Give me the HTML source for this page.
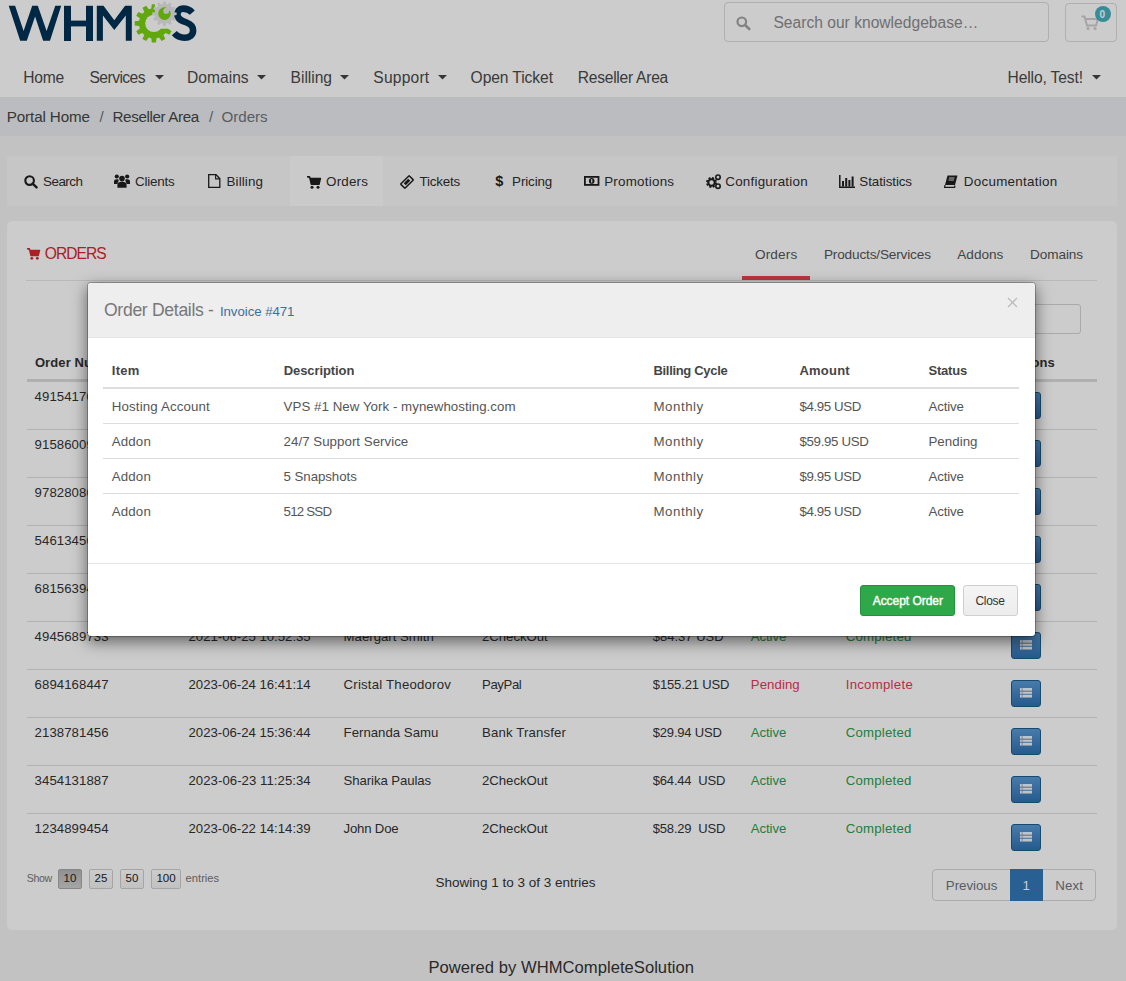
<!DOCTYPE html>
<html><head><meta charset="utf-8"><title>Orders</title>
<style>
html,body{margin:0;padding:0}
body{width:1126px;height:981px;overflow:hidden;position:relative;background:#f3f3f3;font-family:"Liberation Sans",sans-serif}
.a{position:absolute;box-sizing:border-box}
.t{position:absolute;white-space:pre}
svg{position:absolute;overflow:visible}
</style></head><body>
<div class="a" style="left:0px;top:0px;width:1126px;height:97px;background:#fff"></div>
<svg style="left:0;top:0" width="210" height="48" viewBox="0 0 210 48">
<g fill="#003356">
<polygon points="8.7,5.8 15.1,5.8 23.6,31 32.2,5.8 37.8,5.8 46.6,31 55.3,5.8 61.2,5.8 50,40.7 43.1,40.7 35.1,16.4 26.8,40.7 20.2,40.7"/>
<rect x="64" y="5.8" width="7" height="35.2"/>
<rect x="86" y="5.8" width="7" height="35.2"/>
<rect x="70" y="20.6" width="17" height="5.8"/>
<polygon points="96.8,5.8 103.5,5.8 114.3,20.2 125.1,5.8 131.8,5.8 131.8,40.7 125.8,40.7 125.8,15.5 114.3,30 102.9,15.5 102.9,40.7 96.8,40.7"/>
</g>
<path d="M192.3,12.6 C189.8,9.8 186.3,8.6 183,8.6 C179.2,8.6 177.4,11.2 177.4,14.5 C177.4,19.3 182,20.9 186.6,22.5 C191,24.1 193.1,26.5 193.1,30.5 C193.1,35.2 189.5,37.7 184.5,37.7 C180,37.7 176.6,35.9 174.3,33.2" fill="none" stroke="#003356" stroke-width="6.6"/>
<g id="gg"></g>
</svg>
<svg style="left:0;top:0" width="210" height="48" viewBox="0 0 210 48">
<defs><mask id="mk"><rect x="0" y="0" width="210" height="48" fill="#fff"/>
<circle cx="153.9" cy="23.4" r="8.7" fill="#000"/>
<rect x="155" y="0" width="40" height="28.7" fill="#000"/>
</mask></defs>
<polygon points="168.68,20.82 173.08,21.28 173.08,25.52 168.68,25.98 167.99,28.55 171.57,31.16 169.45,34.83 165.41,33.02 163.52,34.91 165.33,38.95 161.66,41.07 159.05,37.49 156.48,38.18 156.02,42.58 151.78,42.58 151.32,38.18 148.75,37.49 146.14,41.07 142.47,38.95 144.28,34.91 142.39,33.02 138.35,34.83 136.23,31.16 139.81,28.55 139.12,25.98 134.72,25.52 134.72,21.28 139.12,20.82 139.81,18.25 136.23,15.64 138.35,11.97 142.39,13.78 144.28,11.89 142.47,7.85 146.14,5.73 148.75,9.31 151.32,8.62 151.78,4.22 156.02,4.22 156.48,8.62 159.05,9.31 161.66,5.73 165.33,7.85 163.52,11.89 165.41,13.78 169.45,11.97 171.57,15.64 167.99,18.25" fill="#7ad310" mask="url(#mk)"/>
<polygon points="174.06,12.17 176.63,12.51 176.63,15.09 174.06,15.43 173.59,17.22 175.64,18.80 174.35,21.03 171.95,20.05 170.65,21.35 171.63,23.75 169.40,25.04 167.82,22.99 166.03,23.46 165.69,26.03 163.11,26.03 162.77,23.46 160.98,22.99 159.40,25.04 157.17,23.75 158.15,21.35 156.85,20.05 154.45,21.03 153.16,18.80 155.21,17.22 154.74,15.43 152.17,15.09 152.17,12.51 154.74,12.17 155.21,10.38 153.16,8.80 154.45,6.57 156.85,7.55 158.15,6.25 157.17,3.85 159.40,2.56 160.98,4.61 162.77,4.14 163.11,1.57 165.69,1.57 166.03,4.14 167.82,4.61 169.40,2.56 171.63,3.85 170.65,6.25 171.95,7.55 174.35,6.57 175.64,8.80 173.59,10.38" fill="#e6e6e6"/>
<circle cx="164.5" cy="13.6" r="6.3" fill="#7ad310"/>
<circle cx="166.2" cy="10.9" r="2.9" fill="#e6e6e6"/>
<polygon points="164.6,9.3 167.8,12.5 172.5,8 169.3,4.8" fill="#e6e6e6"/>
</svg>
<div class="a" style="left:724px;top:2px;width:325px;height:40px;border:1px solid #dcdcdc;border-radius:4px;background:#fff"></div>
<svg style="left:736px;top:16px" width="15" height="14" viewBox="0 0 15 14">
<circle cx="5.8" cy="5.8" r="4.3" fill="none" stroke="#a3a3a3" stroke-width="2.2"/>
<line x1="9" y1="9" x2="13.3" y2="13" stroke="#a3a3a3" stroke-width="2.6" stroke-linecap="round"/></svg>
<span class="t" style="left:773.40px;top:15.29px;font-size:15.6px;line-height:15.6px;color:#8c8c8c;letter-spacing:0.014px;">Search our knowledgebase…</span>
<div class="a" style="left:1065px;top:3px;width:52px;height:39px;border:1px solid #dcdcdc;border-radius:4px;background:#fff"></div>
<svg style="left:1081px;top:15px" width="18" height="16" viewBox="0 0 18 16">
<path d="M0.5,1.5 H3.5 L6,10.5 H15 L17,4 H5" fill="none" stroke="#cfcfcf" stroke-width="2"/>
<circle cx="7" cy="13.5" r="1.6" fill="#cfcfcf"/><circle cx="14" cy="13.5" r="1.6" fill="#cfcfcf"/></svg>
<div class="a" style="left:1095px;top:6px;width:16px;height:16px;border-radius:8px;background:#45b0c0;"></div>
<span class="t" style="left:1099.40px;top:9.93px;font-size:10px;line-height:10px;color:#fff;font-weight:bold;">0</span>
<span class="t" style="left:23.30px;top:70.19px;font-size:15.6px;line-height:15.6px;color:#4a4a4a;letter-spacing:-0.205px;">Home</span>
<span class="t" style="left:89.50px;top:70.19px;font-size:15.6px;line-height:15.6px;color:#4a4a4a;letter-spacing:-0.546px;">Services</span>
<svg style="left:154.5px;top:75px" width="9" height="5" viewBox="0 0 9 5"><polygon points="0,0 9,0 4.5,4.6" fill="#444"/></svg>
<span class="t" style="left:187.10px;top:70.19px;font-size:15.6px;line-height:15.6px;color:#4a4a4a;letter-spacing:0.007px;">Domains</span>
<svg style="left:257.4px;top:75px" width="9" height="5" viewBox="0 0 9 5"><polygon points="0,0 9,0 4.5,4.6" fill="#444"/></svg>
<span class="t" style="left:290.60px;top:70.19px;font-size:15.6px;line-height:15.6px;color:#4a4a4a;letter-spacing:-0.037px;">Billing</span>
<svg style="left:340.4px;top:75px" width="9" height="5" viewBox="0 0 9 5"><polygon points="0,0 9,0 4.5,4.6" fill="#444"/></svg>
<span class="t" style="left:373.30px;top:70.19px;font-size:15.6px;line-height:15.6px;color:#4a4a4a;letter-spacing:0.210px;">Support</span>
<svg style="left:437.9px;top:75px" width="9" height="5" viewBox="0 0 9 5"><polygon points="0,0 9,0 4.5,4.6" fill="#444"/></svg>
<span class="t" style="left:470.60px;top:70.19px;font-size:15.6px;line-height:15.6px;color:#4a4a4a;letter-spacing:-0.084px;">Open Ticket</span>
<span class="t" style="left:577.80px;top:70.19px;font-size:15.6px;line-height:15.6px;color:#4a4a4a;letter-spacing:-0.262px;">Reseller Area</span>
<span class="t" style="left:1007.50px;top:70.19px;font-size:15.6px;line-height:15.6px;color:#4a4a4a;letter-spacing:-0.116px;">Hello, Test!</span>
<svg style="left:1092.4px;top:75px" width="9" height="5" viewBox="0 0 9 5"><polygon points="0,0 9,0 4.5,4.6" fill="#444"/></svg>
<div class="a" style="left:0px;top:97px;width:1126px;height:39px;background:#e9ecef"></div>
<span class="t" style="left:6.80px;top:108.93px;font-size:15.2px;line-height:15.2px;color:#454545;letter-spacing:-0.128px;">Portal Home</span>
<span class="t" style="left:99.50px;top:108.93px;font-size:15.2px;line-height:15.2px;color:#6c757d;">/</span>
<span class="t" style="left:112.50px;top:108.93px;font-size:15.2px;line-height:15.2px;color:#454545;letter-spacing:-0.371px;">Reseller Area</span>
<span class="t" style="left:209.00px;top:108.93px;font-size:15.2px;line-height:15.2px;color:#6c757d;">/</span>
<span class="t" style="left:221.60px;top:108.93px;font-size:15.2px;line-height:15.2px;color:#6f757b;letter-spacing:-0.091px;">Orders</span>
<div class="a" style="left:7px;top:156px;width:1110px;height:50px;background:#f8f8f8"></div>
<div class="a" style="left:290px;top:156px;width:93px;height:50px;background:#fdfdfd"></div>
<span class="t" style="left:43.00px;top:174.66px;font-size:13.4px;line-height:13.4px;color:#2e2e2e;letter-spacing:-0.492px;">Search</span>
<span class="t" style="left:135.00px;top:174.66px;font-size:13.4px;line-height:13.4px;color:#2e2e2e;letter-spacing:-0.193px;">Clients</span>
<span class="t" style="left:226.60px;top:174.66px;font-size:13.4px;line-height:13.4px;color:#2e2e2e;letter-spacing:0.091px;">Billing</span>
<span class="t" style="left:326.10px;top:174.66px;font-size:13.4px;line-height:13.4px;color:#2e2e2e;letter-spacing:0.189px;">Orders</span>
<span class="t" style="left:419.40px;top:174.66px;font-size:13.4px;line-height:13.4px;color:#2e2e2e;letter-spacing:-0.173px;">Tickets</span>
<span class="t" style="left:512.10px;top:174.66px;font-size:13.4px;line-height:13.4px;color:#2e2e2e;letter-spacing:-0.127px;">Pricing</span>
<span class="t" style="left:604.20px;top:174.66px;font-size:13.4px;line-height:13.4px;color:#2e2e2e;letter-spacing:0.236px;">Promotions</span>
<span class="t" style="left:725.30px;top:174.66px;font-size:13.4px;line-height:13.4px;color:#2e2e2e;letter-spacing:0.224px;">Configuration</span>
<span class="t" style="left:859.30px;top:174.66px;font-size:13.4px;line-height:13.4px;color:#2e2e2e;letter-spacing:-0.090px;">Statistics</span>
<span class="t" style="left:963.80px;top:174.66px;font-size:13.4px;line-height:13.4px;color:#2e2e2e;letter-spacing:0.272px;">Documentation</span>
<svg style="left:23.7px;top:174.9px" width="14" height="14" viewBox="0 0 14 14"><circle cx="5.6" cy="5.6" r="4.3" fill="none" stroke="#1f1f1f" stroke-width="2.1"/><line x1="8.6" y1="8.6" x2="12.6" y2="12.4" stroke="#1f1f1f" stroke-width="2.4" stroke-linecap="round"/></svg>
<svg style="left:114.4px;top:174px" width="16" height="14" viewBox="0 0 16 14"><g fill="#1f1f1f"><circle cx="2.8" cy="2.5" r="2.1"/><circle cx="13.2" cy="2.5" r="2.1"/><circle cx="8" cy="4.6" r="2.8"/>
<path d="M0,10 V7.6 C0,5.9 1,5.2 2.8,5.2 C4.2,5.2 4.9,5.6 4.7,6.6 L3.4,10 Z"/><path d="M16,10 V7.6 C16,5.9 15,5.2 13.2,5.2 C11.8,5.2 11.1,5.6 11.3,6.6 L12.6,10 Z"/>
<path d="M3.4,13.7 V11 C3.4,8.7 5,7.7 8,7.7 C11,7.7 12.6,8.7 12.6,11 V13.7 Z"/></g></svg>
<svg style="left:208px;top:173.8px" width="13" height="15" viewBox="0 0 13 15"><path d="M0.7,0.7 H8 L11.8,4.5 V13.3 H0.7 Z" fill="none" stroke="#1f1f1f" stroke-width="1.3"/><path d="M7.6,0.7 V4.9 H11.8" fill="none" stroke="#1f1f1f" stroke-width="1.1"/></svg>
<svg style="left:307.3px;top:176px" width="14" height="13" viewBox="0 0 14 13"><path d="M0,0.8 H2.6 L4.3,8.2 H12 L13.4,2.6 H3" fill="#1f1f1f" stroke="#1f1f1f" stroke-width="1.5" stroke-linejoin="round"/><circle cx="5" cy="11.2" r="1.5" fill="#1f1f1f"/><circle cx="11" cy="11.2" r="1.5" fill="#1f1f1f"/></svg>
<svg style="left:400.2px;top:174.5px" width="14" height="14" viewBox="0 0 14 14"><g transform="rotate(-45 7 7)"><rect x="1" y="4" width="12" height="6" rx="0.4" fill="none" stroke="#1f1f1f" stroke-width="1.5"/><rect x="3.8" y="5.6" width="6.4" height="2.8" fill="#1f1f1f"/></g></svg>
<span class="t" style="left:495.20px;top:174.23px;font-size:14.5px;line-height:14.5px;color:#1f1f1f;font-weight:bold;">$</span>
<svg style="left:583.5px;top:176px" width="16" height="11" viewBox="0 0 16 11"><rect x="0.9" y="0.9" width="13.6" height="8" fill="none" stroke="#1f1f1f" stroke-width="1.8"/><ellipse cx="7.7" cy="4.9" rx="2.8" ry="2.9" fill="#1f1f1f"/><rect x="7.1" y="3.2" width="1.2" height="3.4" fill="#f8f8f8"/></svg>
<svg style="left:705.8px;top:174px" width="15" height="15" viewBox="0 0 15 15"><circle cx="5.5" cy="8.5" r="4.2" fill="none" stroke="#1f1f1f" stroke-width="2.6" stroke-dasharray="1.9 1.4"/><circle cx="5.5" cy="8.5" r="3.2" fill="none" stroke="#1f1f1f" stroke-width="2"/>
<circle cx="12" cy="3.2" r="2.2" fill="none" stroke="#1f1f1f" stroke-width="1.6"/><circle cx="12" cy="12.2" r="2.2" fill="none" stroke="#1f1f1f" stroke-width="1.6"/></svg>
<svg style="left:838.7px;top:174.5px" width="16" height="13" viewBox="0 0 16 13"><path d="M0.8,0 V12.2 H16" fill="none" stroke="#1f1f1f" stroke-width="1.5"/><rect x="3" y="6" width="2" height="5.5" fill="#1f1f1f"/><rect x="6.2" y="3" width="2" height="8.5" fill="#1f1f1f"/><rect x="9.4" y="5" width="2" height="6.5" fill="#1f1f1f"/><rect x="12.6" y="1.5" width="2" height="10" fill="#1f1f1f"/></svg>
<svg style="left:944.4px;top:175px" width="14" height="13" viewBox="0 0 14 13"><path d="M3.5,0.5 H13.5 L11,10 H1 Z" fill="#1f1f1f"/><path d="M1,10 L0.6,12.3 H10.6 L11,10.5" fill="none" stroke="#1f1f1f" stroke-width="1.2"/><path d="M5,3 H10.5 M4.5,5 H10" stroke="#f8f8f8" stroke-width="0.9"/></svg>
<div class="a" style="left:7px;top:221px;width:1110px;height:709px;background:#fff;border-radius:5px"></div>
<svg style="left:26.6px;top:247.8px" width="13" height="12" viewBox="0 0 13 12"><path d="M0,0.8 H2.4 L4,7.5 H11.2 L12.5,2.4 H2.8" fill="#d8282e" stroke="#d8282e" stroke-width="1.5" stroke-linejoin="round"/><circle cx="4.8" cy="10.3" r="1.4" fill="#d8282e"/><circle cx="10.3" cy="10.3" r="1.4" fill="#d8282e"/></svg>
<span class="t" style="left:44.80px;top:245.99px;font-size:15.6px;line-height:15.6px;color:#d8282e;letter-spacing:-0.989px;">ORDERS</span>
<span class="t" style="left:755.00px;top:248.09px;font-size:13.6px;line-height:13.6px;color:#555;letter-spacing:0.127px;">Orders</span>
<span class="t" style="left:823.90px;top:248.09px;font-size:13.6px;line-height:13.6px;color:#555;letter-spacing:-0.156px;">Products/Services</span>
<span class="t" style="left:957.30px;top:248.09px;font-size:13.6px;line-height:13.6px;color:#555;letter-spacing:-0.005px;">Addons</span>
<span class="t" style="left:1030.10px;top:248.09px;font-size:13.6px;line-height:13.6px;color:#555;letter-spacing:-0.111px;">Domains</span>
<div class="a" style="left:26px;top:280px;width:1071px;height:1px;background:#e8e8e8"></div>
<div class="a" style="left:742px;top:276px;width:68px;height:4px;background:#e8474d"></div>
<div class="a" style="left:900px;top:304px;width:181px;height:30px;border:1px solid #d5d5d5;border-radius:3px;background:#fff"></div>
<span class="t" style="left:34.90px;top:356.00px;font-size:13px;line-height:13px;color:#333;font-weight:bold;letter-spacing:0.1px">Order Number</span>
<span class="t" style="left:1006.50px;top:356.00px;font-size:13px;line-height:13px;color:#333;font-weight:bold;letter-spacing:0.1px">Actions</span>
<div class="a" style="left:27px;top:379px;width:1070px;height:3px;background:#ddd"></div>
<span class="t" style="left:34.60px;top:389.83px;font-size:13.2px;line-height:13.2px;color:#333;letter-spacing:0.065px;">4915417056</span>
<span class="t" style="left:188.50px;top:389.83px;font-size:13.2px;line-height:13.2px;color:#333;letter-spacing:-0.015px;">2023-06-27 12:41:31</span>
<span class="t" style="left:343.60px;top:389.83px;font-size:13.2px;line-height:13.2px;color:#333;">Luigi Mario</span>
<span class="t" style="left:482.00px;top:389.83px;font-size:13.2px;line-height:13.2px;color:#333;letter-spacing:-0.405px;">PayPal</span>
<span class="t" style="left:652.80px;top:390.00px;font-size:13.0px;line-height:13.0px;color:#333;">$45.50 USD</span>
<span class="t" style="left:750.80px;top:389.83px;font-size:13.2px;line-height:13.2px;color:#2e9d4a;letter-spacing:-0.089px;">Active</span>
<span class="t" style="left:845.70px;top:389.83px;font-size:13.2px;line-height:13.2px;color:#2e9d4a;letter-spacing:0.233px;">Completed</span>
<div class="a" style="left:1011px;top:392px;width:30px;height:27px;border:1px solid #1b5f8a;border-radius:3px;background:linear-gradient(#5b9bd8,#3070b0)"></div>
<svg style="left:1020px;top:400px" width="12" height="10" viewBox="0 0 12 10"><rect x="0" y="0" width="12" height="9.5" fill="#f4f4f4"/><path d="M0,3.2 H12 M0,6.3 H12" stroke="#4f7fb0" stroke-width="0.9"/><path d="M2.2,0 V9.5" stroke="#6f95bd" stroke-width="0.7"/></svg>
<div class="a" style="left:27px;top:429px;width:1070px;height:1px;background:#dedede"></div>
<span class="t" style="left:34.60px;top:437.83px;font-size:13.2px;line-height:13.2px;color:#333;letter-spacing:0.065px;">9158600973</span>
<span class="t" style="left:188.50px;top:437.83px;font-size:13.2px;line-height:13.2px;color:#333;letter-spacing:-0.015px;">2023-06-26 18:22:05</span>
<span class="t" style="left:343.60px;top:437.83px;font-size:13.2px;line-height:13.2px;color:#333;">Anna Kowalski</span>
<span class="t" style="left:482.00px;top:437.83px;font-size:13.2px;line-height:13.2px;color:#333;letter-spacing:-0.029px;">2CheckOut</span>
<span class="t" style="left:652.80px;top:438.00px;font-size:13.0px;line-height:13.0px;color:#333;">$19.99 USD</span>
<span class="t" style="left:750.80px;top:437.83px;font-size:13.2px;line-height:13.2px;color:#2e9d4a;letter-spacing:-0.089px;">Active</span>
<span class="t" style="left:845.70px;top:437.83px;font-size:13.2px;line-height:13.2px;color:#2e9d4a;letter-spacing:0.233px;">Completed</span>
<div class="a" style="left:1011px;top:440px;width:30px;height:27px;border:1px solid #1b5f8a;border-radius:3px;background:linear-gradient(#5b9bd8,#3070b0)"></div>
<svg style="left:1020px;top:448px" width="12" height="10" viewBox="0 0 12 10"><rect x="0" y="0" width="12" height="9.5" fill="#f4f4f4"/><path d="M0,3.2 H12 M0,6.3 H12" stroke="#4f7fb0" stroke-width="0.9"/><path d="M2.2,0 V9.5" stroke="#6f95bd" stroke-width="0.7"/></svg>
<div class="a" style="left:27px;top:477px;width:1070px;height:1px;background:#dedede"></div>
<span class="t" style="left:34.60px;top:485.83px;font-size:13.2px;line-height:13.2px;color:#333;letter-spacing:0.065px;">9782808612</span>
<span class="t" style="left:188.50px;top:485.83px;font-size:13.2px;line-height:13.2px;color:#333;letter-spacing:-0.015px;">2023-06-26 09:12:45</span>
<span class="t" style="left:343.60px;top:485.83px;font-size:13.2px;line-height:13.2px;color:#333;">Mark Davis</span>
<span class="t" style="left:482.00px;top:485.83px;font-size:13.2px;line-height:13.2px;color:#333;letter-spacing:0.144px;">Bank Transfer</span>
<span class="t" style="left:652.80px;top:486.00px;font-size:13.0px;line-height:13.0px;color:#333;">$39.90 USD</span>
<span class="t" style="left:750.80px;top:485.83px;font-size:13.2px;line-height:13.2px;color:#2e9d4a;letter-spacing:-0.089px;">Active</span>
<span class="t" style="left:845.70px;top:485.83px;font-size:13.2px;line-height:13.2px;color:#2e9d4a;letter-spacing:0.233px;">Completed</span>
<div class="a" style="left:1011px;top:488px;width:30px;height:27px;border:1px solid #1b5f8a;border-radius:3px;background:linear-gradient(#5b9bd8,#3070b0)"></div>
<svg style="left:1020px;top:496px" width="12" height="10" viewBox="0 0 12 10"><rect x="0" y="0" width="12" height="9.5" fill="#f4f4f4"/><path d="M0,3.2 H12 M0,6.3 H12" stroke="#4f7fb0" stroke-width="0.9"/><path d="M2.2,0 V9.5" stroke="#6f95bd" stroke-width="0.7"/></svg>
<div class="a" style="left:27px;top:525px;width:1070px;height:1px;background:#dedede"></div>
<span class="t" style="left:34.60px;top:533.83px;font-size:13.2px;line-height:13.2px;color:#333;letter-spacing:0.065px;">5461345621</span>
<span class="t" style="left:188.50px;top:533.83px;font-size:13.2px;line-height:13.2px;color:#333;letter-spacing:-0.015px;">2023-06-25 19:30:12</span>
<span class="t" style="left:343.60px;top:533.83px;font-size:13.2px;line-height:13.2px;color:#333;">Sarah Jones</span>
<span class="t" style="left:482.00px;top:533.83px;font-size:13.2px;line-height:13.2px;color:#333;letter-spacing:-0.405px;">PayPal</span>
<span class="t" style="left:652.80px;top:534.00px;font-size:13.0px;line-height:13.0px;color:#333;">$12.95 USD</span>
<span class="t" style="left:750.80px;top:533.83px;font-size:13.2px;line-height:13.2px;color:#2e9d4a;letter-spacing:-0.089px;">Active</span>
<span class="t" style="left:845.70px;top:533.83px;font-size:13.2px;line-height:13.2px;color:#2e9d4a;letter-spacing:0.233px;">Completed</span>
<div class="a" style="left:1011px;top:536px;width:30px;height:27px;border:1px solid #1b5f8a;border-radius:3px;background:linear-gradient(#5b9bd8,#3070b0)"></div>
<svg style="left:1020px;top:544px" width="12" height="10" viewBox="0 0 12 10"><rect x="0" y="0" width="12" height="9.5" fill="#f4f4f4"/><path d="M0,3.2 H12 M0,6.3 H12" stroke="#4f7fb0" stroke-width="0.9"/><path d="M2.2,0 V9.5" stroke="#6f95bd" stroke-width="0.7"/></svg>
<div class="a" style="left:27px;top:573px;width:1070px;height:1px;background:#dedede"></div>
<span class="t" style="left:34.60px;top:581.83px;font-size:13.2px;line-height:13.2px;color:#333;letter-spacing:0.065px;">6815639412</span>
<span class="t" style="left:188.50px;top:581.83px;font-size:13.2px;line-height:13.2px;color:#333;letter-spacing:-0.015px;">2023-06-25 14:08:02</span>
<span class="t" style="left:343.60px;top:581.83px;font-size:13.2px;line-height:13.2px;color:#333;">Tom Brown</span>
<span class="t" style="left:482.00px;top:581.83px;font-size:13.2px;line-height:13.2px;color:#333;letter-spacing:-0.029px;">2CheckOut</span>
<span class="t" style="left:652.80px;top:582.00px;font-size:13.0px;line-height:13.0px;color:#333;">$99.00 USD</span>
<span class="t" style="left:750.80px;top:581.83px;font-size:13.2px;line-height:13.2px;color:#2e9d4a;letter-spacing:-0.089px;">Active</span>
<span class="t" style="left:845.70px;top:581.83px;font-size:13.2px;line-height:13.2px;color:#2e9d4a;letter-spacing:0.233px;">Completed</span>
<div class="a" style="left:1011px;top:584px;width:30px;height:27px;border:1px solid #1b5f8a;border-radius:3px;background:linear-gradient(#5b9bd8,#3070b0)"></div>
<svg style="left:1020px;top:592px" width="12" height="10" viewBox="0 0 12 10"><rect x="0" y="0" width="12" height="9.5" fill="#f4f4f4"/><path d="M0,3.2 H12 M0,6.3 H12" stroke="#4f7fb0" stroke-width="0.9"/><path d="M2.2,0 V9.5" stroke="#6f95bd" stroke-width="0.7"/></svg>
<div class="a" style="left:27px;top:621px;width:1070px;height:1px;background:#dedede"></div>
<span class="t" style="left:34.60px;top:629.83px;font-size:13.2px;line-height:13.2px;color:#333;letter-spacing:0.065px;">4945689733</span>
<span class="t" style="left:188.50px;top:629.83px;font-size:13.2px;line-height:13.2px;color:#333;letter-spacing:-0.015px;">2021-06-25 10:52:35</span>
<span class="t" style="left:343.60px;top:629.83px;font-size:13.2px;line-height:13.2px;color:#333;">Maergart Smith</span>
<span class="t" style="left:482.00px;top:629.83px;font-size:13.2px;line-height:13.2px;color:#333;letter-spacing:-0.029px;">2CheckOut</span>
<span class="t" style="left:652.80px;top:630.00px;font-size:13.0px;line-height:13.0px;color:#333;">$84.37 USD</span>
<span class="t" style="left:750.80px;top:629.83px;font-size:13.2px;line-height:13.2px;color:#2e9d4a;letter-spacing:-0.089px;">Active</span>
<span class="t" style="left:845.70px;top:629.83px;font-size:13.2px;line-height:13.2px;color:#2e9d4a;letter-spacing:0.233px;">Completed</span>
<div class="a" style="left:1011px;top:632px;width:30px;height:27px;border:1px solid #1b5f8a;border-radius:3px;background:linear-gradient(#5b9bd8,#3070b0)"></div>
<svg style="left:1020px;top:640px" width="12" height="10" viewBox="0 0 12 10"><rect x="0" y="0" width="12" height="9.5" fill="#f4f4f4"/><path d="M0,3.2 H12 M0,6.3 H12" stroke="#4f7fb0" stroke-width="0.9"/><path d="M2.2,0 V9.5" stroke="#6f95bd" stroke-width="0.7"/></svg>
<div class="a" style="left:27px;top:669px;width:1070px;height:1px;background:#dedede"></div>
<span class="t" style="left:34.60px;top:677.83px;font-size:13.2px;line-height:13.2px;color:#333;letter-spacing:0.065px;">6894168447</span>
<span class="t" style="left:188.50px;top:677.83px;font-size:13.2px;line-height:13.2px;color:#333;letter-spacing:-0.015px;">2023-06-24 16:41:14</span>
<span class="t" style="left:343.60px;top:677.83px;font-size:13.2px;line-height:13.2px;color:#333;letter-spacing:0.210px;">Cristal Theodorov</span>
<span class="t" style="left:482.00px;top:677.83px;font-size:13.2px;line-height:13.2px;color:#333;letter-spacing:-0.405px;">PayPal</span>
<span class="t" style="left:652.80px;top:678.00px;font-size:13.0px;line-height:13.0px;color:#333;letter-spacing:-0.135px;">$155.21 USD</span>
<span class="t" style="left:750.80px;top:677.83px;font-size:13.2px;line-height:13.2px;color:#e23a5a;letter-spacing:0.076px;">Pending</span>
<span class="t" style="left:845.70px;top:677.83px;font-size:13.2px;line-height:13.2px;color:#e23a5a;letter-spacing:0.281px;">Incomplete</span>
<div class="a" style="left:1011px;top:680px;width:30px;height:27px;border:1px solid #1b5f8a;border-radius:3px;background:linear-gradient(#5b9bd8,#3070b0)"></div>
<svg style="left:1020px;top:688px" width="12" height="10" viewBox="0 0 12 10"><rect x="0" y="0" width="12" height="9.5" fill="#f4f4f4"/><path d="M0,3.2 H12 M0,6.3 H12" stroke="#4f7fb0" stroke-width="0.9"/><path d="M2.2,0 V9.5" stroke="#6f95bd" stroke-width="0.7"/></svg>
<div class="a" style="left:27px;top:717px;width:1070px;height:1px;background:#dedede"></div>
<span class="t" style="left:34.60px;top:725.83px;font-size:13.2px;line-height:13.2px;color:#333;letter-spacing:0.065px;">2138781456</span>
<span class="t" style="left:188.50px;top:725.83px;font-size:13.2px;line-height:13.2px;color:#333;letter-spacing:-0.015px;">2023-06-24 15:36:44</span>
<span class="t" style="left:343.60px;top:725.83px;font-size:13.2px;line-height:13.2px;color:#333;letter-spacing:0.012px;">Fernanda Samu</span>
<span class="t" style="left:482.00px;top:725.83px;font-size:13.2px;line-height:13.2px;color:#333;letter-spacing:0.144px;">Bank Transfer</span>
<span class="t" style="left:652.80px;top:726.00px;font-size:13.0px;line-height:13.0px;color:#333;letter-spacing:-0.203px;">$29.94 USD</span>
<span class="t" style="left:750.80px;top:725.83px;font-size:13.2px;line-height:13.2px;color:#2e9d4a;letter-spacing:-0.089px;">Active</span>
<span class="t" style="left:845.70px;top:725.83px;font-size:13.2px;line-height:13.2px;color:#2e9d4a;letter-spacing:0.233px;">Completed</span>
<div class="a" style="left:1011px;top:728px;width:30px;height:27px;border:1px solid #1b5f8a;border-radius:3px;background:linear-gradient(#5b9bd8,#3070b0)"></div>
<svg style="left:1020px;top:736px" width="12" height="10" viewBox="0 0 12 10"><rect x="0" y="0" width="12" height="9.5" fill="#f4f4f4"/><path d="M0,3.2 H12 M0,6.3 H12" stroke="#4f7fb0" stroke-width="0.9"/><path d="M2.2,0 V9.5" stroke="#6f95bd" stroke-width="0.7"/></svg>
<div class="a" style="left:27px;top:765px;width:1070px;height:1px;background:#dedede"></div>
<span class="t" style="left:34.60px;top:773.83px;font-size:13.2px;line-height:13.2px;color:#333;letter-spacing:0.065px;">3454131887</span>
<span class="t" style="left:188.50px;top:773.83px;font-size:13.2px;line-height:13.2px;color:#333;letter-spacing:0.039px;">2023-06-23 11:25:34</span>
<span class="t" style="left:343.60px;top:773.83px;font-size:13.2px;line-height:13.2px;color:#333;letter-spacing:-0.084px;">Sharika Paulas</span>
<span class="t" style="left:482.00px;top:773.83px;font-size:13.2px;line-height:13.2px;color:#333;letter-spacing:-0.029px;">2CheckOut</span>
<span class="t" style="left:652.80px;top:774.00px;font-size:13.0px;line-height:13.0px;color:#333;letter-spacing:-0.193px;">$64.44  USD</span>
<span class="t" style="left:750.80px;top:773.83px;font-size:13.2px;line-height:13.2px;color:#2e9d4a;letter-spacing:-0.089px;">Active</span>
<span class="t" style="left:845.70px;top:773.83px;font-size:13.2px;line-height:13.2px;color:#2e9d4a;letter-spacing:0.233px;">Completed</span>
<div class="a" style="left:1011px;top:776px;width:30px;height:27px;border:1px solid #1b5f8a;border-radius:3px;background:linear-gradient(#5b9bd8,#3070b0)"></div>
<svg style="left:1020px;top:784px" width="12" height="10" viewBox="0 0 12 10"><rect x="0" y="0" width="12" height="9.5" fill="#f4f4f4"/><path d="M0,3.2 H12 M0,6.3 H12" stroke="#4f7fb0" stroke-width="0.9"/><path d="M2.2,0 V9.5" stroke="#6f95bd" stroke-width="0.7"/></svg>
<div class="a" style="left:27px;top:813px;width:1070px;height:1px;background:#dedede"></div>
<span class="t" style="left:34.60px;top:821.83px;font-size:13.2px;line-height:13.2px;color:#333;letter-spacing:0.065px;">1234899454</span>
<span class="t" style="left:188.50px;top:821.83px;font-size:13.2px;line-height:13.2px;color:#333;letter-spacing:-0.015px;">2023-06-22 14:14:39</span>
<span class="t" style="left:343.60px;top:821.83px;font-size:13.2px;line-height:13.2px;color:#333;letter-spacing:-0.201px;">John Doe</span>
<span class="t" style="left:482.00px;top:821.83px;font-size:13.2px;line-height:13.2px;color:#333;letter-spacing:-0.029px;">2CheckOut</span>
<span class="t" style="left:652.80px;top:822.00px;font-size:13.0px;line-height:13.0px;color:#333;letter-spacing:-0.193px;">$58.29  USD</span>
<span class="t" style="left:750.80px;top:821.83px;font-size:13.2px;line-height:13.2px;color:#2e9d4a;letter-spacing:-0.089px;">Active</span>
<span class="t" style="left:845.70px;top:821.83px;font-size:13.2px;line-height:13.2px;color:#2e9d4a;letter-spacing:0.233px;">Completed</span>
<div class="a" style="left:1011px;top:824px;width:30px;height:27px;border:1px solid #1b5f8a;border-radius:3px;background:linear-gradient(#5b9bd8,#3070b0)"></div>
<svg style="left:1020px;top:832px" width="12" height="10" viewBox="0 0 12 10"><rect x="0" y="0" width="12" height="9.5" fill="#f4f4f4"/><path d="M0,3.2 H12 M0,6.3 H12" stroke="#4f7fb0" stroke-width="0.9"/><path d="M2.2,0 V9.5" stroke="#6f95bd" stroke-width="0.7"/></svg>
<span class="t" style="left:26.70px;top:873.43px;font-size:10.6px;line-height:10.6px;color:#777;letter-spacing:-0.372px;">Show</span>
<div class="a" style="left:58px;top:869px;width:24px;height:20px;border:1px solid #a9a9a9;border-radius:2px;background:linear-gradient(#b5b5b5,#cfcfcf)"></div>
<span class="t" style="left:63.60px;top:873.27px;font-size:11.5px;line-height:11.5px;color:#222;">10</span>
<div class="a" style="left:89px;top:869px;width:24px;height:20px;border:1px solid #cfcfcf;border-radius:2px;background:linear-gradient(#fff,#f2f2f2)"></div>
<span class="t" style="left:94.60px;top:873.27px;font-size:11.5px;line-height:11.5px;color:#222;">25</span>
<div class="a" style="left:120px;top:869px;width:24px;height:20px;border:1px solid #cfcfcf;border-radius:2px;background:linear-gradient(#fff,#f2f2f2)"></div>
<span class="t" style="left:125.60px;top:873.27px;font-size:11.5px;line-height:11.5px;color:#222;">50</span>
<div class="a" style="left:151px;top:869px;width:30px;height:20px;border:1px solid #cfcfcf;border-radius:2px;background:linear-gradient(#fff,#f2f2f2)"></div>
<span class="t" style="left:156.41px;top:873.27px;font-size:11.5px;line-height:11.5px;color:#222;">100</span>
<span class="t" style="left:185.60px;top:872.92px;font-size:11.2px;line-height:11.2px;color:#777;letter-spacing:-0.003px;">entries</span>
<span class="t" style="left:435.60px;top:875.77px;font-size:13.5px;line-height:13.5px;color:#333;letter-spacing:0.002px;">Showing 1 to 3 of 3 entries</span>
<div class="a" style="left:932px;top:869px;width:164px;height:32px;border:1px solid #d6d6d6;border-radius:4px;background:#fff"></div>
<div class="a" style="left:1010px;top:869px;width:33px;height:32px;background:#3378b9"></div>
<span class="t" style="left:945.80px;top:878.74px;font-size:13.3px;line-height:13.3px;color:#6c757d;letter-spacing:-0.035px;">Previous</span>
<span class="t" style="left:1022.50px;top:878.74px;font-size:13.3px;line-height:13.3px;color:#fff;">1</span>
<span class="t" style="left:1055.30px;top:878.74px;font-size:13.3px;line-height:13.3px;color:#6c757d;letter-spacing:0.118px;">Next</span>
<span class="t" style="left:428.40px;top:960.15px;font-size:16.6px;line-height:16.6px;color:#333;letter-spacing:0.031px;">Powered by WHMCompleteSolution</span>
<div class="a" style="left:0px;top:0px;width:1126px;height:981px;background:rgba(0,0,0,0.2)"></div>
<div class="a" style="left:87px;top:282px;width:949px;height:355px;background:#fff;border:1px solid rgba(0,0,0,.25);border-radius:4px;background-clip:padding-box;box-shadow:0 5px 15px rgba(0,0,0,.5);overflow:hidden"><div class="a" style="left:0;top:0;width:947px;height:55px;background:#eeeeee;border-bottom:1px solid #e5e5e5"></div></div>
<span class="t" style="left:104.00px;top:302.30px;font-size:17.6px;line-height:17.6px;color:#787878;letter-spacing:-0.316px;">Order Details -</span>
<span class="t" style="left:219.90px;top:305.23px;font-size:13.2px;line-height:13.2px;color:#3b6f9f;letter-spacing:-0.023px;">Invoice #471</span>
<svg style="left:1007.4px;top:297.2px" width="11" height="11" viewBox="0 0 11 11"><path d="M1,1 L10,10 M10,1 L1,10" stroke="#bbb" stroke-width="1.3"/></svg>
<span class="t" style="left:111.80px;top:364.10px;font-size:13px;line-height:13px;color:#454545;letter-spacing:0.223px;font-weight:bold;">Item</span>
<span class="t" style="left:283.80px;top:364.10px;font-size:13px;line-height:13px;color:#454545;letter-spacing:-0.091px;font-weight:bold;">Description</span>
<span class="t" style="left:653.50px;top:364.10px;font-size:13px;line-height:13px;color:#454545;letter-spacing:-0.318px;font-weight:bold;">Billing Cycle</span>
<span class="t" style="left:799.50px;top:364.10px;font-size:13px;line-height:13px;color:#454545;letter-spacing:0.200px;font-weight:bold;">Amount</span>
<span class="t" style="left:928.40px;top:364.10px;font-size:13px;line-height:13px;color:#454545;letter-spacing:-0.186px;font-weight:bold;">Status</span>
<div class="a" style="left:103px;top:387px;width:916px;height:2px;background:#dddddd"></div>
<span class="t" style="left:111.80px;top:399.94px;font-size:13.3px;line-height:13.3px;color:#555;letter-spacing:0.135px;">Hosting Account</span>
<span class="t" style="left:283.60px;top:399.94px;font-size:13.3px;line-height:13.3px;color:#555;letter-spacing:0.041px;">VPS #1 New York - mynewhosting.com</span>
<span class="t" style="left:653.50px;top:399.94px;font-size:13.3px;line-height:13.3px;color:#555;letter-spacing:0.522px;">Monthly</span>
<span class="t" style="left:799.50px;top:399.94px;font-size:13.3px;line-height:13.3px;color:#555;letter-spacing:-0.407px;">$4.95 USD</span>
<span class="t" style="left:928.40px;top:399.94px;font-size:13.3px;line-height:13.3px;color:#555;letter-spacing:-0.124px;">Active</span>
<div class="a" style="left:103px;top:423px;width:916px;height:1px;background:#dddddd"></div>
<span class="t" style="left:111.80px;top:434.94px;font-size:13.3px;line-height:13.3px;color:#555;letter-spacing:0.135px;">Addon</span>
<span class="t" style="left:283.60px;top:434.94px;font-size:13.3px;line-height:13.3px;color:#555;letter-spacing:0.026px;">24/7 Support Service</span>
<span class="t" style="left:653.50px;top:434.94px;font-size:13.3px;line-height:13.3px;color:#555;letter-spacing:0.522px;">Monthly</span>
<span class="t" style="left:799.50px;top:434.94px;font-size:13.3px;line-height:13.3px;color:#555;letter-spacing:-0.351px;">$59.95 USD</span>
<span class="t" style="left:928.40px;top:434.94px;font-size:13.3px;line-height:13.3px;color:#555;letter-spacing:0.048px;">Pending</span>
<div class="a" style="left:103px;top:458px;width:916px;height:1px;background:#dddddd"></div>
<span class="t" style="left:111.80px;top:469.94px;font-size:13.3px;line-height:13.3px;color:#555;letter-spacing:0.135px;">Addon</span>
<span class="t" style="left:283.60px;top:469.94px;font-size:13.3px;line-height:13.3px;color:#555;letter-spacing:-0.074px;">5 Snapshots</span>
<span class="t" style="left:653.50px;top:469.94px;font-size:13.3px;line-height:13.3px;color:#555;letter-spacing:0.522px;">Monthly</span>
<span class="t" style="left:799.50px;top:469.94px;font-size:13.3px;line-height:13.3px;color:#555;letter-spacing:-0.407px;">$9.95 USD</span>
<span class="t" style="left:928.40px;top:469.94px;font-size:13.3px;line-height:13.3px;color:#555;letter-spacing:-0.124px;">Active</span>
<div class="a" style="left:103px;top:493px;width:916px;height:1px;background:#dddddd"></div>
<span class="t" style="left:111.80px;top:504.94px;font-size:13.3px;line-height:13.3px;color:#555;letter-spacing:0.135px;">Addon</span>
<span class="t" style="left:283.60px;top:504.94px;font-size:13.3px;line-height:13.3px;color:#555;letter-spacing:-0.806px;">512 SSD</span>
<span class="t" style="left:653.50px;top:504.94px;font-size:13.3px;line-height:13.3px;color:#555;letter-spacing:0.522px;">Monthly</span>
<span class="t" style="left:799.50px;top:504.94px;font-size:13.3px;line-height:13.3px;color:#555;letter-spacing:-0.407px;">$4.95 USD</span>
<span class="t" style="left:928.40px;top:504.94px;font-size:13.3px;line-height:13.3px;color:#555;letter-spacing:-0.124px;">Active</span>
<div class="a" style="left:88px;top:563px;width:947px;height:1px;background:#e5e5e5"></div>
<div class="a" style="left:860px;top:585px;width:95px;height:31px;border:1px solid #25913e;border-radius:3px;background:#2fa84a"></div>
<span class="t" style="left:872.70px;top:595.04px;font-size:12px;line-height:12px;color:#fff;letter-spacing:-0.036px;-webkit-text-stroke:0.4px #fff">Accept Order</span>
<div class="a" style="left:963px;top:585px;width:55px;height:31px;border:1px solid #cfcfcf;border-radius:3px;background:linear-gradient(#f5f5f5,#ececec)"></div>
<span class="t" style="left:975.50px;top:595.04px;font-size:12px;line-height:12px;color:#333;letter-spacing:-0.295px;">Close</span>
</body></html>
